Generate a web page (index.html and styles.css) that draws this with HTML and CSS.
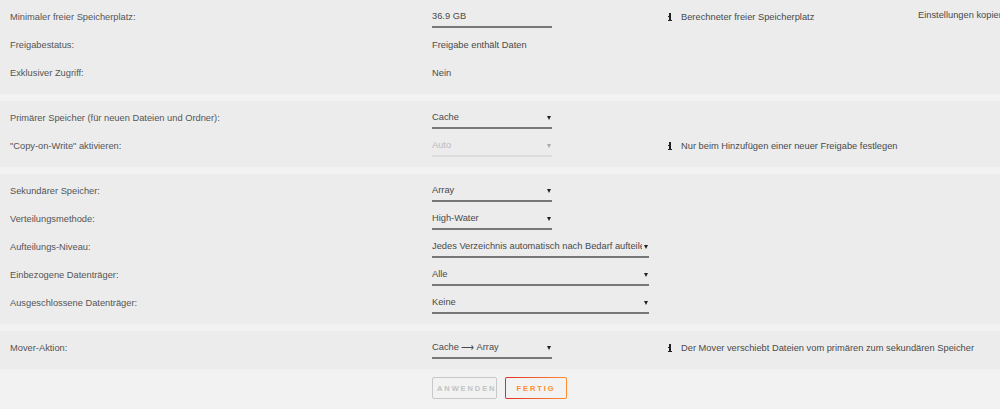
FILE: index.html
```html
<!doctype html>
<html>

<head>
	<meta charset=utf-8>
	<title>Freigabe Einstellungen</title>
	<meta name=viewport content="width=device-width, initial-scale=1">
	<link rel="stylesheet" href="styles.css">
</head>

<body>
	<section class="block">
		<div class="row">
			<div class="label">Minimaler freier Speicherplatz:</div>
			<div class="field"><div class="input narrow">36.9 GB</div></div>
			<div class="info first">
				<span><i class="icon"></i>Berechneter freier Speicherplatz</span>
				<span class="copy">Einstellungen kopieren von:</span>
			</div>
		</div>
		<div class="row">
			<div class="label">Freigabestatus:</div>
			<div class="field">Freigabe enthält Daten</div>
		</div>
		<div class="row">
			<div class="label">Exklusiver Zugriff:</div>
			<div class="field">Nein</div>
		</div>
	</section>

	<section class="block">
		<div class="row">
			<div class="label">Primärer Speicher (für neuen Dateien und Ordner):</div>
			<div class="field"><div class="select narrow"><span>Cache</span></div></div>
		</div>
		<div class="row">
			<div class="label">"Copy-on-Write" aktivieren:</div>
			<div class="field"><div class="select narrow disabled"><span>Auto</span></div></div>
			<div class="info"><span><i class="icon"></i>Nur beim Hinzufügen einer neuer Freigabe festlegen</span></div>
		</div>
	</section>

	<section class="block">
		<div class="row">
			<div class="label">Sekundärer Speicher:</div>
			<div class="field"><div class="select narrow"><span>Array</span></div></div>
		</div>
		<div class="row">
			<div class="label">Verteilungsmethode:</div>
			<div class="field"><div class="select narrow"><span>High-Water</span></div></div>
		</div>
		<div class="row">
			<div class="label">Aufteilungs-Niveau:</div>
			<div class="field"><div class="select wide"><span>Jedes Verzeichnis automatisch nach Bedarf aufteilen</span></div></div>
		</div>
		<div class="row">
			<div class="label">Einbezogene Datenträger:</div>
			<div class="field"><div class="select wide"><span>Alle</span></div></div>
		</div>
		<div class="row">
			<div class="label">Ausgeschlossene Datenträger:</div>
			<div class="field"><div class="select wide"><span>Keine</span></div></div>
		</div>
	</section>

	<section class="block">
		<div class="row">
			<div class="label">Mover-Aktion:</div>
			<div class="field"><div class="select narrow"><span>Cache ⟶ Array</span></div></div>
			<div class="info"><span><i class="icon"></i>Der Mover verschiebt Dateien vom primären zum sekundären Speicher</span></div>
		</div>
	</section>

	<div class="buttons">
		<button class="btn" disabled>Anwenden</button>
		<button class="btn primary">Fertig</button>
	</div>
</body>
</html>
```

FILE: styles.css
```css
html, body{
	margin: 0; padding: 0;
	background-color: #f2f2f2;
	color: #555;
	font-family: "Liberation Sans", Arial, sans-serif;
	font-size: 9.3px;
	overflow: hidden;
}

.block{
	background-color: #ececec;
	padding: 3px 0 7px 10px;
	margin-bottom: 7px;
}

.row{
	display: grid;
	grid-template-columns: 422px 236px 1fr;
	height: 28px;
	align-items: center;
}

.field{
	color: #4a4a4a;
}

.input, .select{
	position: relative;
	height: 20px;
	line-height: 20px;
	border-bottom: 2px solid #777;
	white-space: nowrap;
	overflow: hidden;
	color: #4a4a4a;
}

.narrow{ width: 120px; }
.wide{ width: 217px; }

.select span{
	display: block;
	overflow: hidden;
	margin-right: 7px;
}

.select:after{
	content: "";
	position: absolute;
	right: 1px;
	top: 9px;
	border-left: 2.5px solid transparent;
	border-right: 2.5px solid transparent;
	border-top: 4px solid #222;
}

.select.disabled{
	color: #bbb;
	border-bottom-color: #ddd;
}

.select.disabled:after{
	border-top-color: #aaa;
}

.info{
	color: #4a4a4a;
	display: flex;
	align-items: center;
}

.info.first{
	justify-content: space-between;
}

.icon{
	display: inline-block;
	width: 4px;
	height: 8px;
	margin-right: 9px;
	vertical-align: -1px;
	background:
		radial-gradient(circle, #222 1.2px, transparent 1.3px) center 0/4px 3px no-repeat,
		linear-gradient(#222, #222) 1px 3px/2px 5px no-repeat,
		linear-gradient(#222, #222) 0 3px/2px 1px no-repeat,
		linear-gradient(#222, #222) 0 7px/4px 1px no-repeat;
}

.copy{
	width: 82px;
	white-space: nowrap;
	align-self: flex-start;
	margin-top: -2px;
}

.buttons{
	display: flex;
	gap: 8px;
	padding: 1px 0 0 432px;
}

.btn{
	height: 22px;
	padding: 0 4px;
	font-family: inherit;
	font-size: 7.5px;
	font-weight: bold;
	letter-spacing: 1.9px;
	text-transform: uppercase;
	border-radius: 2px;
	background-color: #f2f2f2;
}

.btn[disabled]{
	width: 65px;
	color: #c2c2c2;
	border: 1.5px solid #c8c8c8;
}

.btn.primary{
	width: 62px;
	color: #ff8c2f;
	border: 1.5px solid transparent;
	background:
		linear-gradient(#f2f2f2, #f2f2f2) padding-box,
		linear-gradient(90deg, #e22d2d, #ff8c2f) border-box;
}
```
